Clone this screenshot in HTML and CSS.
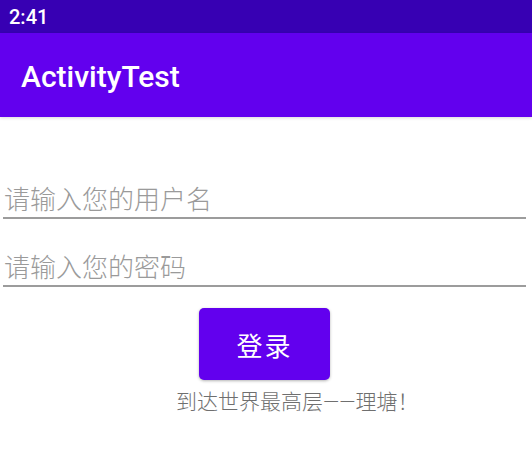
FILE: index.html
```html
<!DOCTYPE html>
<html lang="zh-CN">
<head>
    <meta charset="UTF-8">
    <meta name="viewport" content="width=device-width, initial-scale=1.0">
    <title>ActivityTest</title>
    <link rel="stylesheet" href="styles.css">
</head>
<body>

    <div class="barra-estado">
        <span class="hora">2:41</span>
    </div>

    <div class="barra-app">
        <span class="titulo">ActivityTest</span>
    </div>

    <div class="contenido">
        <div class="campo">
            <input type="text" class="entrada" placeholder="请输入您的用户名">
        </div>
        <div class="campo">
            <input type="password" class="entrada" placeholder="请输入您的密码">
        </div>

        <div class="fila-boton">
            <button class="boton">登录</button>
        </div>

        <p class="leyenda">到达世界最高层——理塘！</p>
    </div>

</body>
</html>
```

FILE: styles.css
```css
body {
    margin: 0;
    font-family: Roboto, "Noto Sans CJK SC", sans-serif;
    background: #fff;
    overflow: hidden;
}

.barra-estado {
    height: 33px;
    background-color: #3700b3; /* morado oscuro */
    display: flex;
    align-items: center;
    padding-left: 9px;
}

.hora {
    color: #fff;
    font-size: 20px;
    font-weight: 500;
}

.barra-app {
    height: 84px;
    background-color: #6200ee;
    display: flex;
    align-items: center;
    padding-left: 21px;
    box-shadow: 0 1px 3px rgba(0, 0, 0, 0.15);
}

.titulo {
    color: #fff;
    font-size: 30px;
    font-weight: 500;
    padding-top: 2px;
}

.contenido {
    margin: 34px 6px 0 3px;
}

.campo {
    height: 68px;
    box-sizing: border-box;
    border-bottom: 2px solid #9c9c9c;
    display: flex;
    align-items: flex-end;
    padding-bottom: 4px;
}

.entrada {
    width: 100%;
    border: none;
    outline: none;
    padding: 0 0 0 1px;
    margin: 0;
    background: transparent;
    font-family: "Noto Sans CJK SC", sans-serif;
    font-size: 26px;
    font-weight: 300;
    line-height: 30px;
    height: 30px;
    color: #333;
}

.entrada::placeholder {
    color: #9a9a9a;
}

.fila-boton {
    display: flex;
    justify-content: center;
    margin-top: 21px;
}

.boton {
    width: 131px;
    height: 72px;
    background-color: #6200ee;
    color: #fff;
    border: none;
    border-radius: 5px;
    font-family: "Noto Sans CJK SC", sans-serif;
    font-size: 26px;
    letter-spacing: 2px;
    box-shadow: 0 1px 3px rgba(0, 0, 0, 0.3);
}

.leyenda {
    margin: 8px 0 0 173px;
    font-size: 21px;
    font-weight: 300;
    line-height: 28px;
    color: #6f6f6f;
}
```
